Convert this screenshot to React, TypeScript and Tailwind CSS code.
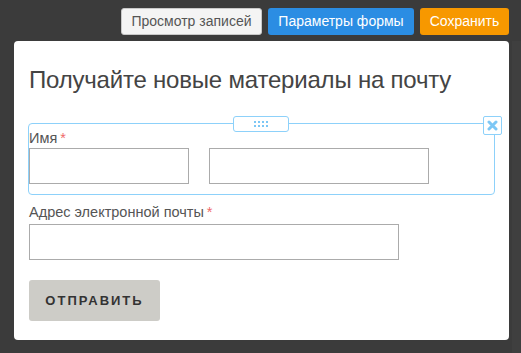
import React from "react";

export default function App() {
  const font = { fontFamily: '"Liberation Sans", Arial, sans-serif' };
  return (
    <div className="w-[521px] h-[353px] bg-[#3b3b3b] overflow-hidden relative" style={font}>
      <div className="flex justify-end gap-[6px] pt-[8px] pr-[12px]">
        <button className="h-[27px] w-[141px] rounded-[3px] border border-[#c8c8c8] bg-[#f4f4f4] text-[14px] text-[#555]">
          Просмотр записей
        </button>
        <button className="h-[27px] w-[146px] rounded-[3px] bg-[#2b8de3] text-[14px] text-white">
          Параметры формы
        </button>
        <button className="h-[27px] w-[89px] rounded-[3px] bg-[#f79800] text-[14px] text-white">
          Сохранить
        </button>
      </div>
      <div className="absolute right-0 top-[41px] w-[9px] h-[312px] bg-[#3f3f3f]" />
      <div className="ml-[14px] mt-[6px] w-[495px] h-[299px] rounded-[4px] bg-white pl-[15px] pt-[25px]">
        <div className="text-[24px] leading-[28px] tracking-[-0.2px] text-[#444]">Получайте новые материалы на почту</div>
        <div className="relative mt-[29px] -ml-[1px] w-[467px] h-[72px] rounded-[4px] border border-[#8dd1fa] pl-0 pt-[6px]">
          <div className="absolute left-[204px] top-[-8px] w-[56px] h-[16px] rounded-[3px] border border-[#8dd1fa] bg-white flex items-center justify-center">
            <div className="grid grid-cols-4 gap-x-[2px] gap-y-[2px]">
              {Array.from({ length: 8 }).map((_, i) => (
                <div key={i} className="w-[2px] h-[2px] bg-[#7dc7f5]" />
              ))}
            </div>
          </div>
          <div className="absolute left-[454px] top-[-8px] w-[19px] h-[19px] rounded-[2px] border border-[#8dd1fa] bg-white flex items-center justify-center">
            <svg width="11" height="11" viewBox="0 0 11 11">
              <path d="M2 2 L9 9 M9 2 L2 9" stroke="#7dc7f5" strokeWidth="3" strokeLinecap="round" />
            </svg>
          </div>
          <div className="text-[14.5px] leading-[16px] text-[#555]">
            Имя<span className="text-[#ef6a6a] ml-[3px]">*</span>
          </div>
          <div className="flex gap-[20px] mt-[2px]">
            <div className="w-[160px] h-[36px] border border-[#ababab]" />
            <div className="w-[220px] h-[36px] border border-[#ababab]" />
          </div>
        </div>
        <div className="mt-[9px] text-[14.5px] leading-[16px] text-[#555]">
          Адрес электронной почты<span className="text-[#ef6a6a] ml-[3px]">*</span>
        </div>
        <div className="mt-[4px] w-[370px] h-[36px] border border-[#ababab]" />
        <button className="mt-[20px] w-[131px] h-[41px] rounded-[3px] bg-[#cdccc7] text-[13px] font-bold tracking-[2px] text-[#333]">
          ОТПРАВИТЬ
        </button>
      </div>
    </div>
  );
}
